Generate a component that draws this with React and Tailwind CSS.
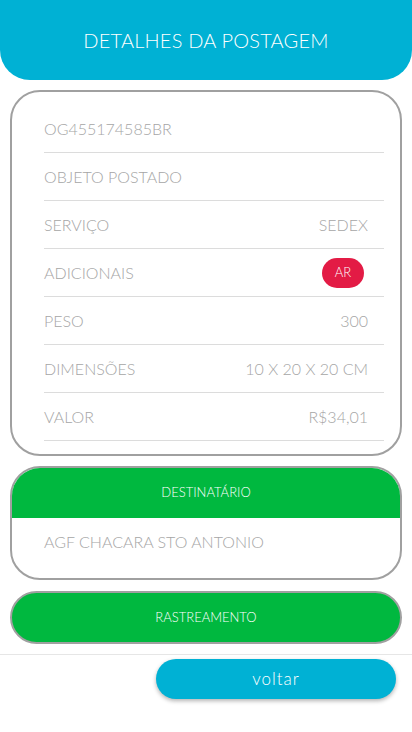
const rows = [
  { label: "OG455174585BR" },
  { label: "OBJETO POSTADO" },
  { label: "SERVIÇO", value: "SEDEX" },
  { label: "ADICIONAIS", badge: "AR" },
  { label: "PESO", value: "300" },
  { label: "DIMENSÕES", value: "10 X 20 X 20 CM" },
  { label: "VALOR", value: "R$34,01" },
];

export default function App() {
  return (
    <div className="min-h-screen bg-white font-['Lato','Open_Sans',sans-serif] font-light">
      {/* Header */}
      <div className="h-20 bg-[#00b1d4] rounded-b-[30px] flex items-center justify-center">
        <h1 className="text-white text-[20px] font-light tracking-[0.2px]">DETALHES DA POSTAGEM</h1>
      </div>

      <div className="px-[10px]">
        {/* Details card */}
        <div className="mt-[10px] border-2 border-[#a0a0a0] rounded-[30px] pt-[13px] pb-[13px] pl-[32px] pr-[16px]">
          {rows.map((row) => (
            <div
              key={row.label}
              className="h-12 border-b border-[#dcdcdc] flex items-center justify-between"
            >
              <span className="text-[#a6a6a6] text-[16px]">{row.label}</span>
              {row.value && <span className="text-[#a6a6a6] text-[16px] pr-4">{row.value}</span>}
              {row.badge && (
                <span className="mr-5 h-[30px] w-[42px] rounded-full bg-[#e31b45] text-white text-[13px] flex items-center justify-center">
                  {row.badge}
                </span>
              )}
            </div>
          ))}
        </div>

        {/* Destinatario */}
        <div className="mt-[10px] border-2 border-[#a0a0a0] rounded-[30px] overflow-hidden">
          <div className="h-[50px] bg-[#00b83f] flex items-center justify-center text-white text-[13px]">
            DESTINATÁRIO
          </div>
          <div className="h-[60px] pl-[32px] pt-[12px] text-[#a6a6a6] text-[16px]">
            AGF CHACARA STO ANTONIO
          </div>
        </div>

        {/* Rastreamento */}
        <button className="mt-[11px] w-full h-[53px] rounded-full border-2 border-[#a0a0a0] bg-[#00b83f] text-white text-[13px] font-light">
          RASTREAMENTO
        </button>
      </div>

      {/* Footer */}
      <div className="mt-[10px] border-t border-[#e6e6e6] flex justify-end px-4 pt-1">
        <button className="w-[240px] h-10 rounded-full bg-[#00b1d4] text-white text-[17px] tracking-[1px] font-light shadow-[0_2px_4px_rgba(0,0,0,0.3)]">
          voltar
        </button>
      </div>
    </div>
  );
}
